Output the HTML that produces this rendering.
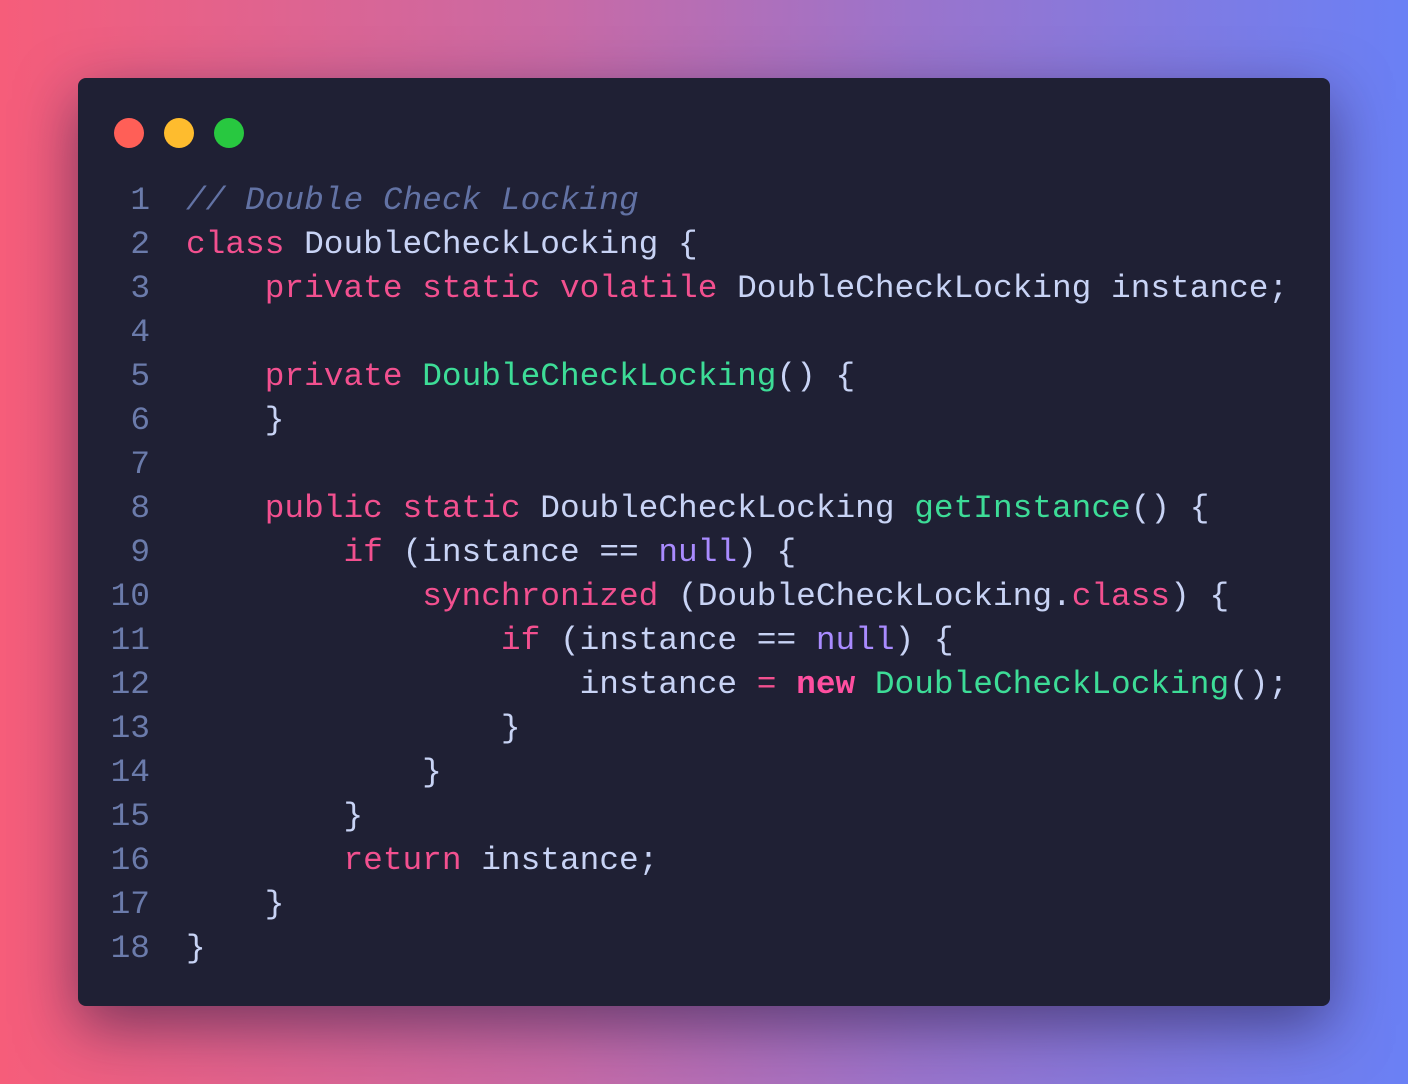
<!DOCTYPE html>
<html><head><meta charset="utf-8"><style>
html,body{margin:0;padding:0;}
body{width:1408px;height:1084px;overflow:hidden;background:linear-gradient(90deg,#f65d7a 0%,#c86aa6 40%,#9a74cc 65%,#6a80f5 100%);position:relative;font-family:"Liberation Mono",monospace;}
.card{position:absolute;left:78px;top:78px;width:1252px;height:928px;background:#1f2034;border-radius:8px;box-shadow:0 20px 60px rgba(30,20,60,0.55);}
.dot{position:absolute;top:40px;width:30px;height:30px;border-radius:50%;}
.code{position:absolute;left:0;top:101px;font-size:32.8px;line-height:44px;color:#c8d3f5;white-space:pre;}
.ln{display:inline-block;width:72px;text-align:right;color:#6b7bab;margin-right:36px;}
.k{color:#f2508f}.g{color:#3ddc97}.n{color:#a98bff}.c{color:#6272a4;font-style:italic}.b{font-weight:bold;color:#ff4fa0}
</style></head><body>
<div class="card">
<div class="dot" style="left:36px;background:#ff5f57"></div>
<div class="dot" style="left:86px;background:#febc2e"></div>
<div class="dot" style="left:136px;background:#28c840"></div>
<div class="code"><span class="ln">1</span><span class="c">// Double Check Locking</span>
<span class="ln">2</span><span class="k">class</span> DoubleCheckLocking {
<span class="ln">3</span>    <span class="k">private static volatile</span> DoubleCheckLocking instance;
<span class="ln">4</span>
<span class="ln">5</span>    <span class="k">private</span> <span class="g">DoubleCheckLocking</span>() {
<span class="ln">6</span>    }
<span class="ln">7</span>
<span class="ln">8</span>    <span class="k">public static</span> DoubleCheckLocking <span class="g">getInstance</span>() {
<span class="ln">9</span>        <span class="k">if</span> (instance == <span class="n">null</span>) {
<span class="ln">10</span>            <span class="k">synchronized</span> (DoubleCheckLocking.<span class="k">class</span>) {
<span class="ln">11</span>                <span class="k">if</span> (instance == <span class="n">null</span>) {
<span class="ln">12</span>                    instance <span class="k">=</span> <span class="b">new</span> <span class="g">DoubleCheckLocking</span>();
<span class="ln">13</span>                }
<span class="ln">14</span>            }
<span class="ln">15</span>        }
<span class="ln">16</span>        <span class="k">return</span> instance;
<span class="ln">17</span>    }
<span class="ln">18</span>}</div>
</div>
</body></html>
